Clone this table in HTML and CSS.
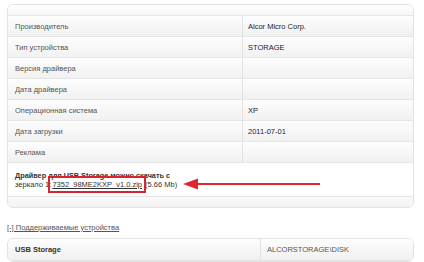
FILE: index.html
```html
<!DOCTYPE html>
<html>
<head>
    <meta charset="UTF-8">
    <meta name="viewport" content="width=device-width, initial-scale=1.0">
    <title>Alcor Micro USB Storage</title>
    <link rel="stylesheet" href="styles.css">
</head>
<body>
    <div class="page">
        <table class="info">
            <tr class="head"><td colspan="2"></td></tr>
            <tr><td class="label">Производитель</td><td class="value">Alcor Micro Corp.</td></tr>
            <tr><td class="label">Тип устройства</td><td class="value">STORAGE</td></tr>
            <tr><td class="label">Версия драйвера</td><td class="value"></td></tr>
            <tr><td class="label">Дата драйвера</td><td class="value"></td></tr>
            <tr><td class="label">Операционная система</td><td class="value">XP</td></tr>
            <tr><td class="label">Дата загрузки</td><td class="value">2011-07-01</td></tr>
            <tr><td class="label">Реклама</td><td class="value"></td></tr>
            <tr class="download">
                <td colspan="2">
                    <b>Драйвер для USB Storage можно скачать с</b><br>
                    зеркало 1: <span class="mark"><a href="#">7352_98ME2KXP_v1.0.zip</a></span> (5.66 Mb)
                    <!-- pointer next to the mirror link -->
                    <svg class="arrow" width="138" height="12" viewBox="0 0 138 12">
                        <path d="M12 6 H137" stroke="#e0262c" stroke-width="2"/>
                        <path d="M0 6 L15 0.5 L15 11.5 Z" fill="#e0262c"/>
                    </svg>
                </td>
            </tr>
            <tr class="foot"><td colspan="2"></td></tr>
        </table>

        <a class="toggle" href="#">[-] Поддерживаемые устройства</a>

        <table class="devices">
            <tr><td class="name">USB Storage</td><td class="hwid">ALCORSTORAGE\DISK</td></tr>
        </table>
    </div>
</body>
</html>
```

FILE: styles.css
```css
body {
    margin: 0;
    background: #fff;
    font-family: 'Liberation Sans', Arial, sans-serif;
    font-size: 7.5px;
    color: #555;
}
.page {
    padding: 4px 10px 0 7px;
}
table {
    width: 100%;
    border-collapse: separate;
    border-spacing: 0;
    border: 1px solid #e2e2e2;
    border-radius: 6px;
    overflow: hidden;
}
td {
    padding: 0 7px;
    border-bottom: 1px solid #e6e6e6;
    background: linear-gradient(#fdfdfd, #f1f1f1);
}
.info .label {
    width: 220px;
    border-right: 1px solid #e2e2e2;
}
.info tr {
    height: 21px;
}
.info .value {
    color: #222;
    padding-left: 5px;
}
.info .head {
    height: 11px;
}
.info .head td {
    background: linear-gradient(#fff, #f6f6f6);
}
.download td {
    position: relative;
    background: #fff;
    color: #333;
    line-height: 9px;
    padding-top: 8px;
    padding-bottom: 7px;
}
.download b {
    font-size: 7.3px;
}
.download a {
    color: #333;
}
/* red frame drawn round the mirror link, overlapping the colon */
.mark {
    border: 2px solid #d9252c;
    padding: 2px;
    margin: 0 -3px 0 -5px;
}
.arrow {
    position: absolute;
    left: 175px;
    top: 15px;
}
.info .foot {
    height: 10px;
}
.info .foot td {
    border-bottom: none;
    background: linear-gradient(#fafafa, #f2f2f2);
}
.toggle {
    display: block;
    margin: 15px 0 6px;
    color: #555;
}
.devices tr {
    height: 22px;
}
.devices .name {
    width: 238px;
    font-weight: bold;
    color: #333;
    border-right: 1px solid #e2e2e2;
}
.devices .hwid {
    padding-left: 6px;
}
```
